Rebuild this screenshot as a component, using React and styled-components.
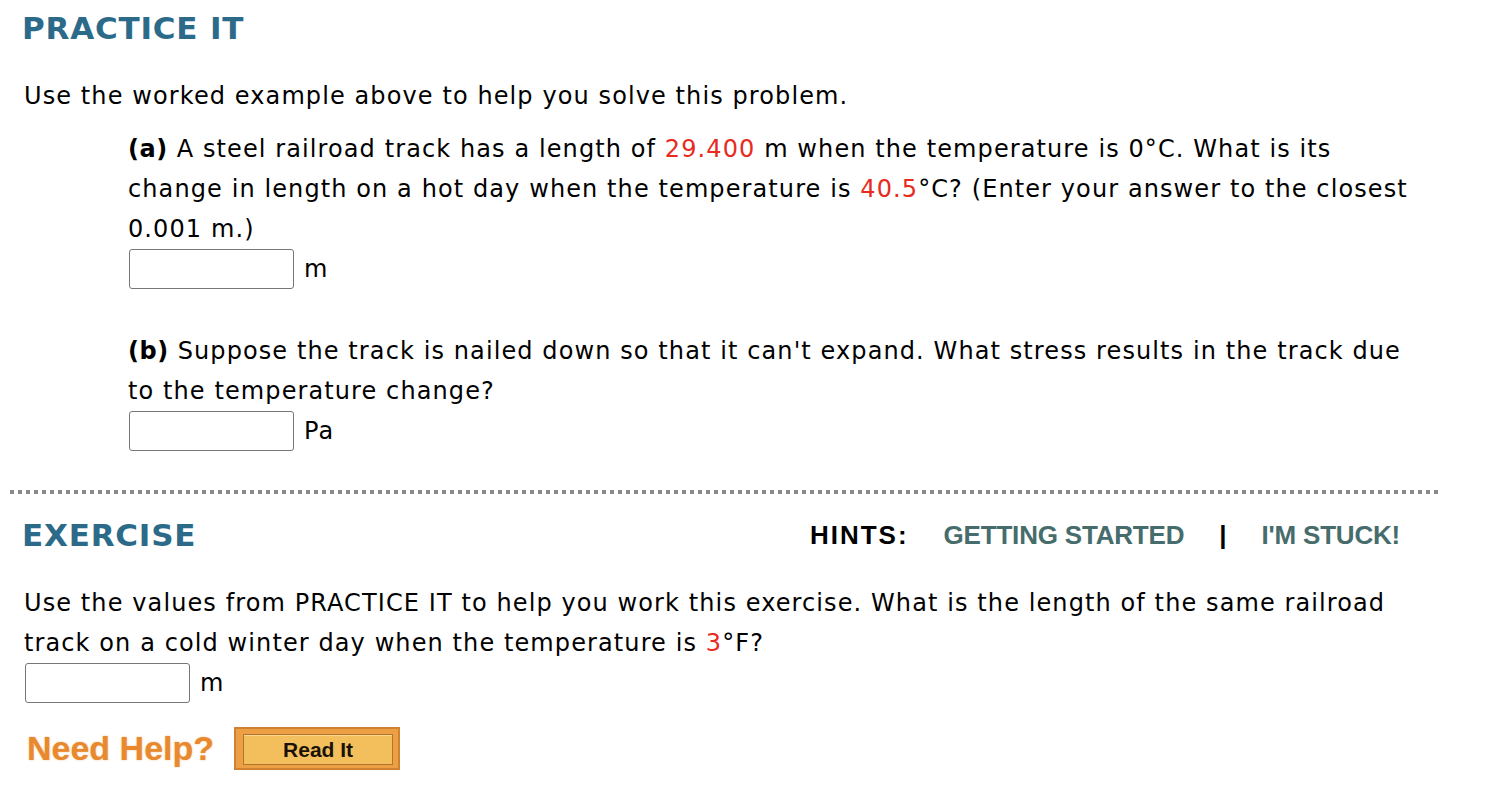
import React from "react";
import styled, { createGlobalStyle } from "styled-components";

const GlobalStyle = createGlobalStyle`
    body {
        margin: 0;
        background: #ffffff;
        color: #000000;
        font-family: "DejaVu Sans", Verdana, sans-serif;
    }
`;

// Layout
const Page = styled.div`
    width: 1432px;
    margin-left: 8px;
    padding-top: 8px;
`;

const Section = styled.div`
    padding: 0 10px 0 14px;
`;

const Heading = styled.h2`
    margin: 0;
    font-family: "DejaVu Sans", Verdana, sans-serif;
    font-weight: bold;
    font-size: 31px;
    letter-spacing: 0.8px;
    line-height: 40px;
    color: #2c6a8a;
`;

const Para = styled.p`
    margin: ${(p) => p.$top || 0}px 0 0 ${(p) => p.$indent || 2}px;
    font-size: 24px;
    letter-spacing: 1.1px;
    line-height: 40px;
`;

const Label = styled.b`
    font-weight: bold;
    letter-spacing: 0.6px;
`;

const Red = styled.span`
    color: #e72b1e;
`;

const AnswerRow = styled.div`
    display: flex;
    align-items: center;
    height: 40px;
    margin-left: ${(p) => p.$indent || 3}px;
    font-size: 24px;
`;

const AnswerBox = styled.input`
    box-sizing: border-box;
    width: 165px;
    height: 40px;
    margin: 0;
    border: 1.5px solid #777777;
    border-radius: 3px;
    background: #ffffff;
    font-size: 20px;
    padding: 0 6px;
`;

const Unit = styled.span`
    margin-left: 10px;
    font-size: 24px;
    letter-spacing: 1.1px;
`;

const Divider = styled.div`
    height: 4px;
    margin: ${(p) => p.$top}px 0 0 2px;
    background: repeating-linear-gradient(to right, #8a8a8a 0 4px, transparent 4px 8px);
`;

const ExerciseBar = styled.div`
    display: flex;
    align-items: center;
    justify-content: space-between;
    height: 40px;
    margin-top: 21px;
    padding-right: 30px;
`;

const Hints = styled.div`
    display: flex;
    align-items: center;
    gap: 35px;
    font-family: "Liberation Sans", Arial, sans-serif;
    font-weight: bold;
    font-size: 26px;
`;

const HintLabel = styled.span`
    color: #000000;
    letter-spacing: 2px;
`;

const HintLink = styled.a`
    color: #466c6c;
    text-decoration: none;
    letter-spacing: -0.2px;
    cursor: pointer;
`;

const Sep = styled.span`
    color: #000000;
`;

const HelpRow = styled.div`
    display: flex;
    align-items: center;
    gap: 20px;
    margin: 24px 0 0 5px;
    height: 43px;
`;

const NeedHelp = styled.span`
    font-family: "Liberation Sans", Arial, sans-serif;
    font-weight: bold;
    font-size: 34px;
    color: #e8892d;
    text-shadow: 0 0 2px rgba(232, 137, 45, 0.55);
`;

const ReadIt = styled.button`
    box-sizing: border-box;
    width: 166px;
    height: 43px;
    padding: 5px 5px 3px 7px;
    border: 2px solid #cf8232;
    background: #eda043;
    cursor: pointer;
    display: flex;
`;

const ReadItFace = styled.span`
    flex: 1;
    display: flex;
    align-items: center;
    justify-content: center;
    border: 1px solid #b27530;
    background: #f3bf5d;
    box-shadow: inset 0 1px 0 #f8d588;
    font-family: "Liberation Sans", Arial, sans-serif;
    font-weight: bold;
    font-size: 21px;
    color: #1a1208;
`;

export default function App() {
    return (
        <>
            <GlobalStyle />
            <Page>
                <Section>
                    <Heading>PRACTICE IT</Heading>
                    <Para $top={28}>Use the worked example above to help you solve this problem.</Para>

                    <Para $top={13} $indent={106}>
                        <Label>(a)</Label> A steel railroad track has a length of <Red>29.400</Red> m when the
                        temperature is 0°C. What is its change in length on a hot day when the temperature
                        is <Red>40.5</Red>°C? (Enter your answer to the closest 0.001 m.)
                    </Para>
                    <AnswerRow $indent={107}>
                        <AnswerBox type="text" />
                        <Unit>m</Unit>
                    </AnswerRow>

                    <Para $top={42} $indent={106}>
                        <Label>(b)</Label> Suppose the track is nailed down so that it can't expand. What stress
                        results in the track due to the temperature change?
                    </Para>
                    <AnswerRow $indent={107}>
                        <AnswerBox type="text" />
                        <Unit>Pa</Unit>
                    </AnswerRow>
                </Section>

                <Divider $top={39} />

                <Section>
                    <ExerciseBar>
                        <Heading>EXERCISE</Heading>
                        <Hints>
                            <HintLabel>HINTS:</HintLabel>
                            <HintLink>GETTING STARTED</HintLink>
                            <Sep>|</Sep>
                            <HintLink>I'M STUCK!</HintLink>
                        </Hints>
                    </ExerciseBar>

                    <Para $top={28}>
                        Use the values from PRACTICE IT to help you work this exercise. What is the length of
                        the same railroad track on a cold winter day when the temperature is <Red>3</Red>°F?
                    </Para>
                    <AnswerRow>
                        <AnswerBox type="text" />
                        <Unit>m</Unit>
                    </AnswerRow>

                    <HelpRow>
                        <NeedHelp>Need Help?</NeedHelp>
                        <ReadIt type="button">
                            <ReadItFace>Read It</ReadItFace>
                        </ReadIt>
                    </HelpRow>
                </Section>
            </Page>
        </>
    );
}
